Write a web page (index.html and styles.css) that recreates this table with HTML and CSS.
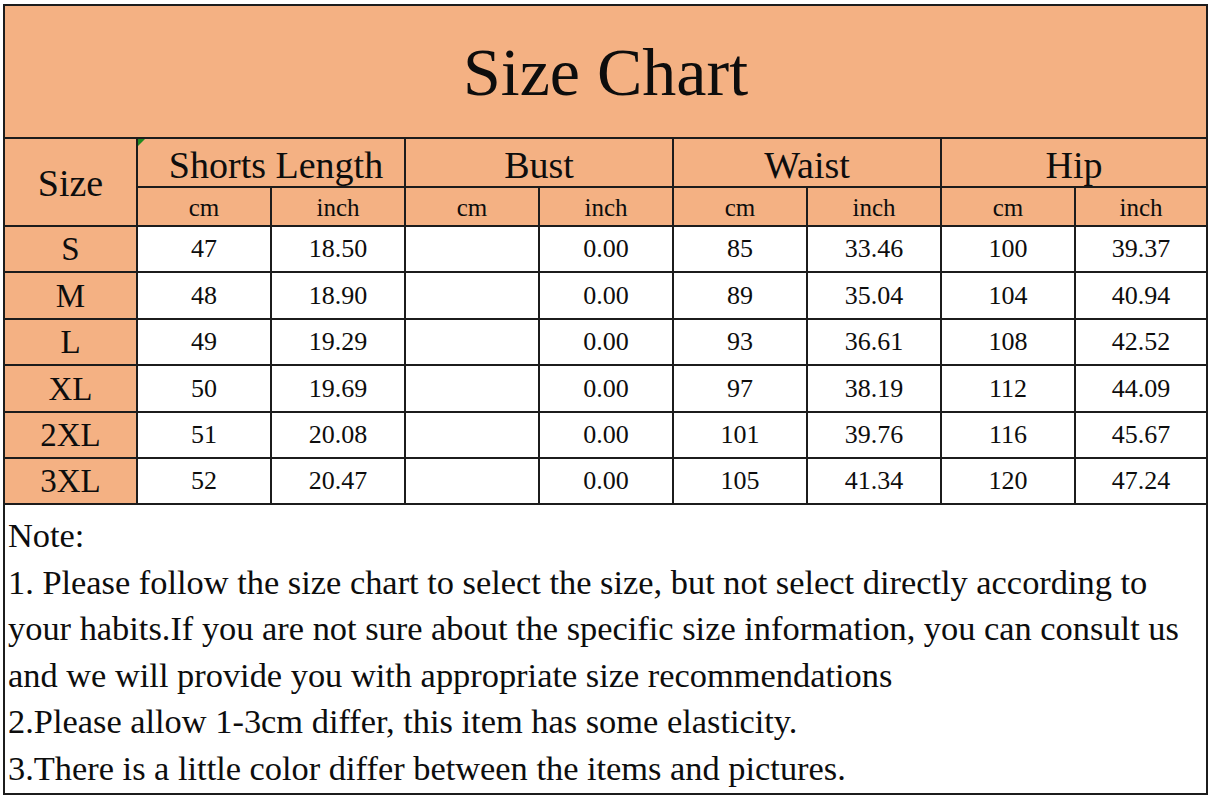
FILE: index.html
```html
<!DOCTYPE html>
<html>
<head>
<meta charset="utf-8">
<link rel="stylesheet" href="styles.css">
</head>
<body>
<div class="sheet">
  <div class="chart">
    <div class="cell title">Size Chart</div>

    <div class="cell hd size-hd">Size</div>
    <div class="cell hd group first-group">Shorts Length<span class="flag"></span></div>
    <div class="cell hd group">Bust</div>
    <div class="cell hd group">Waist</div>
    <div class="cell hd group">Hip</div>

    <div class="cell sub">cm</div><div class="cell sub">inch</div>
    <div class="cell sub">cm</div><div class="cell sub">inch</div>
    <div class="cell sub">cm</div><div class="cell sub">inch</div>
    <div class="cell sub">cm</div><div class="cell sub">inch</div>

    <div class="cell sz">S</div><div class="cell v">47</div><div class="cell v">18.50</div><div class="cell v"></div><div class="cell v">0.00</div><div class="cell v">85</div><div class="cell v">33.46</div><div class="cell v">100</div><div class="cell v">39.37</div>
    <div class="cell sz">M</div><div class="cell v">48</div><div class="cell v">18.90</div><div class="cell v"></div><div class="cell v">0.00</div><div class="cell v">89</div><div class="cell v">35.04</div><div class="cell v">104</div><div class="cell v">40.94</div>
    <div class="cell sz">L</div><div class="cell v">49</div><div class="cell v">19.29</div><div class="cell v"></div><div class="cell v">0.00</div><div class="cell v">93</div><div class="cell v">36.61</div><div class="cell v">108</div><div class="cell v">42.52</div>
    <div class="cell sz">XL</div><div class="cell v">50</div><div class="cell v">19.69</div><div class="cell v"></div><div class="cell v">0.00</div><div class="cell v">97</div><div class="cell v">38.19</div><div class="cell v">112</div><div class="cell v">44.09</div>
    <div class="cell sz">2XL</div><div class="cell v">51</div><div class="cell v">20.08</div><div class="cell v"></div><div class="cell v">0.00</div><div class="cell v">101</div><div class="cell v">39.76</div><div class="cell v">116</div><div class="cell v">45.67</div>
    <div class="cell sz">3XL</div><div class="cell v">52</div><div class="cell v">20.47</div><div class="cell v"></div><div class="cell v">0.00</div><div class="cell v">105</div><div class="cell v">41.34</div><div class="cell v">120</div><div class="cell v">47.24</div>

    <div class="cell note">
      <p>Note:</p>
      <p>1. Please follow the size chart to select the size, but not select directly according to your habits.If you are not sure about the specific size information, you can consult us and we will provide you with appropriate size recommendations</p>
      <p>2.Please allow 1-3cm differ, this item has some elasticity.</p>
      <p>3.There is a little color differ between the items and pictures.</p>
    </div>
  </div>
</div>
</body>
</html>
```

FILE: styles.css
```css
html, body {
  margin: 0;
  padding: 0;
  background: #ffffff;
}
body {
  width: 1213px;
  height: 800px;
  overflow: hidden;
  font-family: "Liberation Serif", "Times New Roman", serif;
  color: #0d0d0d;
}
.sheet {
  padding: 4px 0 0 3px;
}
.chart {
  display: grid;
  width: max-content;
  grid-template-columns: 131px repeat(7, 132px) 130px;
  grid-template-rows: 131px 47px 37px 44px 45px 44px 45px 44px 44px 288px;
  gap: 2px;
  padding: 2px;
  background: #1c1c1c;
}
.cell {
  background: #ffffff;
  display: flex;
  align-items: center;
  justify-content: center;
  position: relative;
  white-space: nowrap;
}
.title {
  grid-column: 1 / -1;
  background: #f4b183;
  font-size: 68px;
  padding-top: 2px;
}
.hd {
  background: #f4b183;
  font-size: 38px;
}
.size-hd {
  grid-row: 2 / 4;
  font-size: 38px;
  padding-top: 2px;
}
.group {
  grid-column: span 2;
  padding-top: 4px;
}
.first-group {
  padding-left: 10px;
}
.flag {
  position: absolute;
  left: 0;
  top: 0;
  width: 0;
  height: 0;
  border-top: 7px solid #1f8a1f;
  border-right: 7px solid transparent;
}
.sub {
  background: #f4b183;
  font-size: 25px;
  padding-top: 3px;
}
.sz {
  background: #f4b183;
  font-size: 33px;
  padding-top: 1px;
}
.v {
  font-size: 26px;
}
.note {
  grid-column: 1 / -1;
  display: block;
  white-space: normal;
  font-size: 34.4px;
  line-height: 46.6px;
  padding: 7px 6px 0 3px;
  text-align: left;
}
.note p {
  margin: 0;
}
```
